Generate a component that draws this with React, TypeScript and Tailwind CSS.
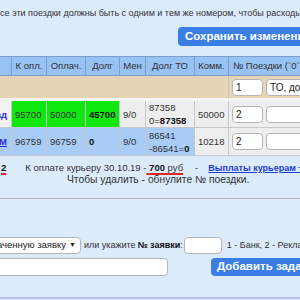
const cell = "border border-[#c4c9cf] px-[3px] align-middle";
const head = "border border-[#7d9dcc] bg-[#98c1f4] text-center font-normal h-[19px]";

function Inputs({ num, kind }: { num: string; kind: string }) {
  return (
    <div className="flex items-center gap-[3px]">
      <div className="h-[17px] w-[31px] shrink-0 rounded-[4px] border border-[#b5b5b5] bg-white pl-[3px] leading-[15px] text-[10px] text-[#222]">
        {num}
      </div>
      <div className="h-[17px] w-[120px] shrink-0 rounded-[4px] border border-[#b5b5b5] bg-white pl-[3px] leading-[15px] text-[10px] text-[#222] whitespace-nowrap">
        {kind}
      </div>
    </div>
  );
}

const rows = [
  {
    name: "Склад",
    bg: "bg-[#f2f2f2]",
    pay: "bg-[#0fe80f]",
    men: "bg-[#eeeeee]",
    to: "bg-[#eeeeee]",
    kOpl: "95700",
    paid: "50000",
    debt: "45700",
    toA: "87358",
    toB: "0=",
    toC: "87358",
    comm: "50000",
  },
  {
    name: "ПЭМ",
    bg: "bg-[#a8ccf6]",
    pay: "bg-[#a8ccf6]",
    men: "bg-[#a8ccf6]",
    to: "bg-[#a8ccf6]",
    kOpl: "96759",
    paid: "96759",
    debt: "0",
    toA: "86541",
    toB: "-86541=",
    toC: "0",
    comm: "10218",
  },
];

export default function App() {
  return (
    <div className="h-[300px] w-[300px] overflow-hidden bg-[#dcebfc] font-['Liberation_Sans',Arial,sans-serif] text-[9.5px] text-[#333]">
      <p className="-ml-[6px] whitespace-nowrap pt-[7px] text-[9px] leading-[12px]">
        Все эти поездки должны быть с одним и тем же номером, чтобы расходы учитывались
      </p>

      <div className="ml-[178px] mt-[8px] flex">
        <button className="h-[19px] whitespace-nowrap rounded-[4px] bg-[#3b7fe6] px-[7px] text-[11.5px] font-bold text-white">
          Сохранить изменения
        </button>
      </div>

      <table className="-ml-[49px] mt-[10px] w-[457px] table-fixed border-collapse">
        <colgroup>
          <col className="w-[60px]" />
          <col className="w-[35px]" />
          <col className="w-[39px]" />
          <col className="w-[34px]" />
          <col className="w-[26px]" />
          <col className="w-[49px]" />
          <col className="w-[34px]" />
          <col className="w-[180px]" />
        </colgroup>
        <thead>
          <tr>
            <th className={head}>Курьер</th>
            <th className={head}>К опл.</th>
            <th className={head}>Оплач.</th>
            <th className={head}>Долг</th>
            <th className={head}>Мен</th>
            <th className={head}>Долг ТО</th>
            <th className={head}>Комм.</th>
            <th className={`${head} text-left pl-[4px] whitespace-nowrap`}>№ Поездки (`0` - удалить)</th>
          </tr>
        </thead>
        <tbody>
          <tr className="h-[24px] bg-[#e7d4b4]">
            <td colSpan={7} className="border border-b-[3px] border-[#c4c9cf] border-b-[#f3f3f3]" />
            <td className="border border-b-[3px] border-[#c4c9cf] border-b-[#f3f3f3] pl-[3px]">
              <Inputs num="1" kind="ТО, договор" />
            </td>
          </tr>
          {rows.map((r) => (
            <tr key={r.name} className="h-[28px] leading-[13px]">
              <td className={`${cell} ${r.bg} text-right pr-[4px]`}>
                <a className="font-bold text-[#2b2bcc] underline">{r.name}</a>
              </td>
              <td className={`${cell} ${r.pay}`}>{r.kOpl}</td>
              <td className={`${cell} ${r.pay}`}>{r.paid}</td>
              <td className={`${cell} ${r.pay} font-bold text-[#111]`}>{r.debt}</td>
              <td className={`${cell} ${r.men}`}>9/0</td>
              <td className={`${cell} ${r.to}`}>
                {r.toA}
                <br />
                {r.toB}
                <b className="text-[#111]">{r.toC}</b>
              </td>
              <td className={`${cell} bg-[#eeeeee]`}>{r.comm}</td>
              <td className={`${cell} bg-[#eeeeee]`}>
                <Inputs num="2" kind="" />
              </td>
            </tr>
          ))}
        </tbody>
      </table>

      <div className="mt-[6px] flex whitespace-nowrap leading-[12px]">
        <b className="ml-[1px] text-[#111] underline decoration-[#e02424] decoration-2 underline-offset-[2px]">2</b>
        <span className="ml-[19px]">
          К оплате курьеру 30.10.19 -
          <span className="underline decoration-[#e02424] decoration-2 underline-offset-[2px]">
            {" "}
            <b className="text-[#111]">700</b> руб
          </span>
        </span>
        <span className="ml-[12px]">-</span>
        <a className="ml-[10px] text-[9px] font-bold text-[#1c3fd0] underline">Выплаты курьерам +</a>
      </div>
      <p className="ml-[67px] whitespace-nowrap text-[10.3px] leading-[12px]">Чтобы удалить - обнулите № поездки.</p>

      <div className="mt-[12px] h-px bg-[#b3b6ba]" />

      <div className="mt-[38px] flex items-center whitespace-nowrap">
        <div className="-ml-[8px] flex h-[17px] w-[89px] shrink-0 items-center justify-end overflow-hidden rounded-[4px] border border-[#b5b5b5] bg-white pr-[4px] text-[#222]">
          <span className="shrink-0 whitespace-nowrap">Выберите назначенную заявку</span>
          <span className="ml-[3px] shrink-0 text-[7px]">▼</span>
        </div>
        <span className="ml-[3px] shrink-0 text-[9px]">или укажите </span>
        <b className="ml-[2px] shrink-0 text-[9px] text-[#111]">№ заявки</b>
        <span className="shrink-0 text-[9px]">:</span>
        <div className="ml-[1px] h-[17px] w-[38px] shrink-0 rounded-[4px] border border-[#b5b5b5] bg-white" />
        <span className="ml-[5px] shrink-0 text-[9px]">1 - Банк, 2 - Реклама, 3 - Прочее</span>
      </div>

      <div className="mt-[4px] flex items-center">
        <div className="-ml-[10px] h-[18px] w-[178px] shrink-0 rounded-[4px] border border-[#b5b5b5] bg-white" />
        <button className="ml-[43px] h-[18px] shrink-0 whitespace-nowrap rounded-[4px] bg-[#3b7fe6] px-[6px] text-[11.5px] font-bold text-white">
          Добавить задачу
        </button>
      </div>

      <div className="mt-[21px] h-[2px] bg-[#bcbcf2]" />
    </div>
  );
}
